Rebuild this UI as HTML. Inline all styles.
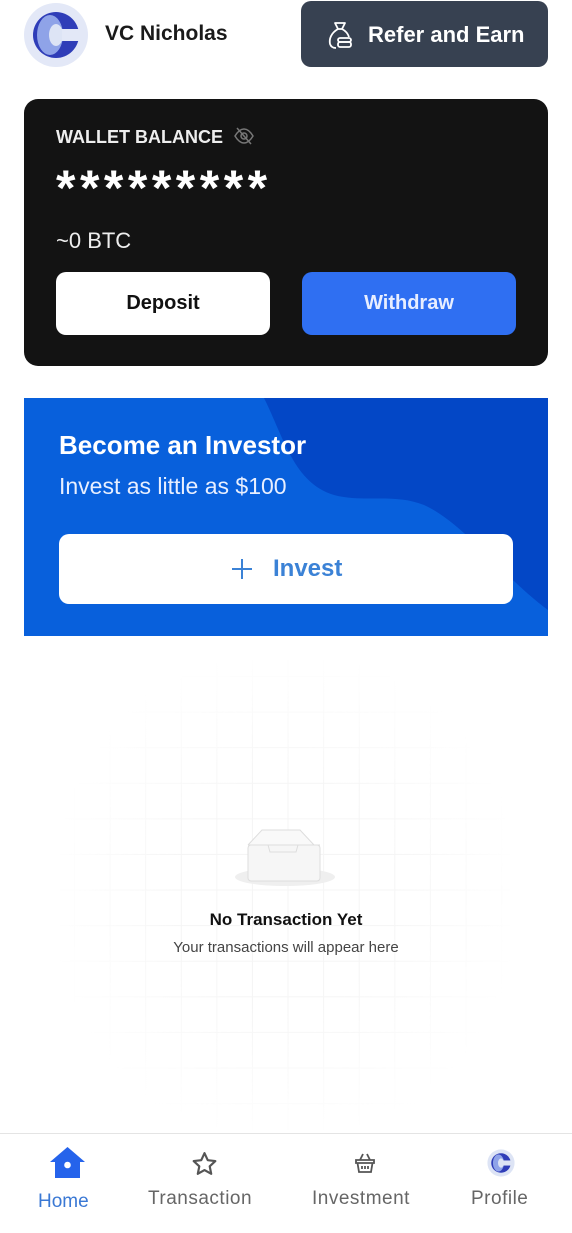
<!DOCTYPE html>
<html><head><meta charset="utf-8"><style>
*{margin:0;padding:0;box-sizing:border-box}
body{width:572px;height:1233px;background:#fff;font-family:"Liberation Sans",sans-serif;position:relative;overflow:hidden}
.abs{position:absolute}
</style></head><body>
<svg class="abs" style="left:23px;top:2px" width="66" height="66" viewBox="0 0 66 66">
<circle cx="33" cy="33" r="32" fill="#e3e8f7"/>
<circle cx="33" cy="33" r="23" fill="#2f3db8"/>
<ellipse cx="27" cy="33" rx="13" ry="20" fill="#8fa3e8"/>
<ellipse cx="33" cy="33" rx="7" ry="11" fill="#dde4f5"/>
<rect x="38" y="27" width="22" height="12" fill="#e3e8f7"/>
<rect x="33" y="27" width="6" height="12" fill="#dde4f5"/>
</svg>
<div class="abs" style="left:105px;top:22px;font-size:21px;font-weight:bold;color:#1a1a1a">VC Nicholas</div>
<div class="abs" style="left:301px;top:1px;width:247px;height:66px;background:#374151;border-radius:10px;color:#fff;font-size:22px;font-weight:bold">
<svg class="abs" style="left:26px;top:20px" width="26" height="28" viewBox="0 0 26 28" fill="none" stroke="#fff" stroke-width="1.8" stroke-linejoin="round"><path d="M8 2h10l-3 6h-4z"/><path d="M11 8C4 12 2 18 3 23c1 3 3 4 6 4"/><path d="M15 8c4 2 6 5 7 8"/><rect x="11" y="17" width="13" height="4" rx="2"/><rect x="11" y="21" width="13" height="5" rx="2"/></svg>
<span class="abs" style="left:67px;top:21px">Refer and Earn</span></div>
<div class="abs" style="left:24px;top:99px;width:524px;height:267px;background:#131313;border-radius:14px">
<div class="abs" style="left:32px;top:28px;color:#eee;font-size:18px;font-weight:bold">WALLET BALANCE</div>
<svg class="abs" style="left:209px;top:27px" width="22" height="20" viewBox="0 0 22 20" fill="none" stroke="#777" stroke-width="1.5"><path d="M2 10c3-5 6-7 9-7s6 2 9 7c-3 5-6 7-9 7s-6-2-9-7z"/><circle cx="11" cy="10" r="3"/><path d="M4 2l14 16"/></svg>
<div class="abs" style="left:32px;top:64px;color:#fff;font-size:50px;font-weight:bold;letter-spacing:4.5px;line-height:50px">*********</div>
<div class="abs" style="left:32px;top:129px;color:#eee;font-size:22px">~0 BTC</div>
<div class="abs" style="left:32px;top:173px;width:214px;height:63px;background:#fff;border-radius:10px;text-align:center;line-height:63px;font-size:20px;font-weight:bold;color:#111">Deposit</div>
<div class="abs" style="left:278px;top:173px;width:214px;height:63px;background:#2f6ff2;border-radius:10px;text-align:center;line-height:63px;font-size:20px;font-weight:bold;color:#e8eeff">Withdraw</div>
</div>
<div class="abs" style="left:24px;top:398px;width:524px;height:238px;background:#0860dc;overflow:hidden">
<svg class="abs" style="left:0;top:0" width="524" height="238"><path d="M240 0 C260 40 270 85 310 97 C340 105 370 95 400 107 C440 125 480 180 524 212 L524 0Z" fill="#0347c6"/></svg>
<div class="abs" style="left:35px;top:32px;color:#fff;font-size:26px;font-weight:bold">Become an Investor</div>
<div class="abs" style="left:35px;top:75px;color:#e8efff;font-size:23px">Invest as little as $100</div>
<div class="abs" style="left:35px;top:136px;width:454px;height:70px;background:#fff;border-radius:10px;color:#3b82d6;font-size:24px;font-weight:bold">
<svg class="abs" style="left:172px;top:24px" width="22" height="22"><path d="M11 1v20M1 11h20" stroke="#3b82d6" stroke-width="2"/></svg>
<span class="abs" style="left:214px;top:21px">Invest</span></div>
</div>
<div class="abs" style="left:60px;top:660px;width:450px;height:470px;background-image:linear-gradient(#f5f5f5 1px,transparent 1px),linear-gradient(90deg,#f5f5f5 1px,transparent 1px);background-size:35.6px 35.6px;background-position:14px 16px;-webkit-mask-image:radial-gradient(ellipse at center,#000 35%,transparent 75%);mask-image:radial-gradient(ellipse at center,#000 35%,transparent 75%)"></div>
<svg class="abs" style="left:234px;top:822px" width="102" height="66" viewBox="0 0 102 66">
<ellipse cx="51" cy="55" rx="50" ry="9" fill="#efefef"/>
<path d="M14 23 L28 8 H66 L80 23" fill="#f9f9f9" stroke="#ddd" stroke-width="1"/>
<rect x="14" y="23" width="72" height="36" rx="3" fill="#f6f6f6" stroke="#ddd"/>
<path d="M14 23 H34 L36 30 H62 L64 23 H86" fill="none" stroke="#ddd"/>
</svg>
<div class="abs" style="left:0;width:572px;top:910px;text-align:center;font-size:17px;font-weight:bold;color:#111">No Transaction Yet</div>
<div class="abs" style="left:0;width:572px;top:939px;text-align:center;font-size:15px;color:#444">Your transactions will appear here</div>
<div class="abs" style="left:0;top:1133px;width:572px;height:1px;background:#e4e4e4"></div>
<svg class="abs" style="left:49px;top:1146px" width="37" height="34" viewBox="0 0 37 34"><path d="M18.5 1 L36 16 H31 V32 H6 V16 H1Z" fill="#2563eb"/><circle cx="18.5" cy="19" r="3.3" fill="#fff"/></svg>
<div class="abs" style="left:38px;top:1191px;font-size:19px;color:#3a78d4">Home</div>
<svg class="abs" style="left:191px;top:1151px" width="27" height="26" viewBox="0 0 24 24" fill="none" stroke="#555" stroke-width="2" stroke-linejoin="round"><path d="M12 2l3 6.5 7 .8-5.2 4.8 1.4 7L12 17.6 5.8 21.1l1.4-7L2 9.3l7-.8z"/></svg>
<div class="abs" style="left:148px;top:1188px;font-size:19px;color:#666;letter-spacing:.5px">Transaction</div>
<svg class="abs" style="left:354px;top:1152px" width="22" height="22" viewBox="0 0 22 22" fill="none" stroke="#555" stroke-width="1.8"><path d="M6 8L9 2M16 8l-3-6"/><path d="M2 8h18v3H2z"/><path d="M3.5 11l1.5 9h12l1.5-9"/><path d="M8 14v3M11 14v3M14 14v3"/></svg>
<div class="abs" style="left:312px;top:1188px;font-size:19px;color:#666;letter-spacing:.5px">Investment</div>
<svg class="abs" style="left:487px;top:1149px" width="28" height="28" viewBox="0 0 66 66"><circle cx="33" cy="33" r="32" fill="#dde4f5"/><circle cx="33" cy="33" r="23" fill="#2f3db8"/><ellipse cx="27" cy="33" rx="13" ry="20" fill="#8fa3e8"/><ellipse cx="33" cy="33" rx="7" ry="11" fill="#dde4f5"/><rect x="38" y="27" width="22" height="12" fill="#dde4f5"/></svg>
<div class="abs" style="left:471px;top:1188px;font-size:19px;color:#666;letter-spacing:.5px">Profile</div>
</body></html>
